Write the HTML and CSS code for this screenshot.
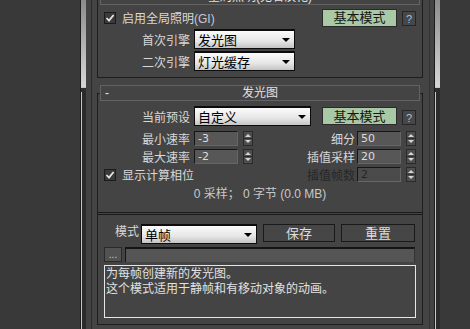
FILE: index.html
```html
<!DOCTYPE html>
<html>
<head>
    <title>发光图</title>
    <link rel="stylesheet" href="styles.css">
</head>
<body>
<div class="frame">
    <div class="scroll"><div class="thumb"></div><div class="track"></div></div>
    <div class="well">
        <div class="rollout top">
            <div class="rtitle"><span class="minus"></span><span class="ttl">全局照明(无名汉化)</span><span class="minus"></span></div>
            <div class="rbody first">
                <div class="row tall">
                    <span class="check">
                        <svg width="12" height="12" viewBox="0 0 12 12"><rect x="0.5" y="0.5" width="11" height="11" fill="#3a3a3a" stroke="#1c1c1c"/><path d="M2.5 6 L5 8.6 L9.6 3" fill="none" stroke="#e4e4e4" stroke-width="1.8"/></svg>
                    </span>
                    <span class="check-label">启用全局照明<span class="latin">(GI)</span></span>
                    <button class="mode">基本模式</button>
                    <button class="help">?</button>
                </div>
                <div class="row combo-row">
                    <label class="lbl">首次引擎</label>
                    <div class="combo w100"><span>发光图</span><span class="arrow"></span></div>
                </div>
                <div class="row combo-row">
                    <label class="lbl">二次引擎</label>
                    <div class="combo w100"><span>灯光缓存</span><span class="arrow"></span></div>
                </div>
            </div>
        </div>

        <div class="rollout second">
            <div class="rtitle"><span class="minus">-</span><span class="ttl">发光图</span><span class="minus"></span></div>
            <div class="rbody">
                <div class="row preset-row">
                    <label class="lbl">当前预设</label>
                    <div class="combo w116"><span>自定义</span><span class="arrow"></span></div>
                    <button class="mode">基本模式</button>
                    <button class="help">?</button>
                </div>
                <div class="row spin-row">
                    <label class="lbl">最小速率</label>
                    <div class="field">-3</div>
                    <span class="spin"><svg width="10" height="15" viewBox="0 0 10 15"><rect x="0.5" y="0.5" width="9" height="14" fill="#4e4e4e" stroke="#2a2a2a"/><path d="M5 3 L8 6 L2 6 Z" fill="#d4d4d4"/><path d="M2 9 L8 9 L5 12 Z" fill="#d4d4d4"/><line x1="1" y1="7.5" x2="9" y2="7.5" stroke="#2e2e2e"/></svg></span>
                    <label class="rlbl">细分</label>
                    <div class="field">50</div>
                    <span class="spin"><svg width="10" height="15" viewBox="0 0 10 15"><rect x="0.5" y="0.5" width="9" height="14" fill="#4e4e4e" stroke="#2a2a2a"/><path d="M5 3 L8 6 L2 6 Z" fill="#d4d4d4"/><path d="M2 9 L8 9 L5 12 Z" fill="#d4d4d4"/><line x1="1" y1="7.5" x2="9" y2="7.5" stroke="#2e2e2e"/></svg></span>
                </div>
                <div class="row spin-row">
                    <label class="lbl">最大速率</label>
                    <div class="field">-2</div>
                    <span class="spin"><svg width="10" height="15" viewBox="0 0 10 15"><rect x="0.5" y="0.5" width="9" height="14" fill="#4e4e4e" stroke="#2a2a2a"/><path d="M5 3 L8 6 L2 6 Z" fill="#d4d4d4"/><path d="M2 9 L8 9 L5 12 Z" fill="#d4d4d4"/><line x1="1" y1="7.5" x2="9" y2="7.5" stroke="#2e2e2e"/></svg></span>
                    <label class="rlbl">插值采样</label>
                    <div class="field">20</div>
                    <span class="spin"><svg width="10" height="15" viewBox="0 0 10 15"><rect x="0.5" y="0.5" width="9" height="14" fill="#4e4e4e" stroke="#2a2a2a"/><path d="M5 3 L8 6 L2 6 Z" fill="#d4d4d4"/><path d="M2 9 L8 9 L5 12 Z" fill="#d4d4d4"/><line x1="1" y1="7.5" x2="9" y2="7.5" stroke="#2e2e2e"/></svg></span>
                </div>
                <div class="row spin-row">
                    <span class="check">
                        <svg width="12" height="12" viewBox="0 0 12 12"><rect x="0.5" y="0.5" width="11" height="11" fill="#3a3a3a" stroke="#1c1c1c"/><path d="M2.5 6 L5 8.6 L9.6 3" fill="none" stroke="#e4e4e4" stroke-width="1.8"/></svg>
                    </span>
                    <span class="check-label">显示计算相位</span>
                    <label class="rlbl off">插值帧数</label>
                    <div class="field off">2</div>
                    <span class="spin"><svg width="10" height="15" viewBox="0 0 10 15"><rect x="0.5" y="0.5" width="9" height="14" fill="#4e4e4e" stroke="#2a2a2a"/><path d="M5 3 L8 6 L2 6 Z" fill="#d4d4d4"/><path d="M2 9 L8 9 L5 12 Z" fill="#d4d4d4"/><line x1="1" y1="7.5" x2="9" y2="7.5" stroke="#2e2e2e"/></svg></span>
                </div>
                <div class="info">0 采样； 0 字节 (0.0 MB)</div>
                <div class="sep"></div>
                <div class="row mode-row">
                    <label class="mlbl">模式</label>
                    <div class="combo w115"><span>单帧</span><span class="arrow"></span></div>
                    <button class="btn w72">保存</button>
                    <button class="btn w74">重置</button>
                </div>
                <div class="row path-row">
                    <button class="dots">...</button>
                    <div class="path"></div>
                </div>
                <div class="notes">为每帧创建新的发光图。<br>这个模式适用于静帧和有移动对象的动画。</div>
            </div>
        </div>
    </div>
    <div class="scroll right"><div class="thumb"></div><div class="track"></div></div>
</div>
</body>
</html>
```

FILE: styles.css
```css
body {
    margin: 0;
    background-color: #393939;
    font-family: "Liberation Sans", "Noto Sans CJK SC", sans-serif;
    font-size: 12px;
    color: #d8d8d8;
    overflow: hidden;
}

.frame {
    display: flex;
    margin-left: 80px;
    width: 360px;
    height: 329px;
    background-color: #434343;
}

.scroll {
    display: flex;
    flex-direction: column;
    width: 5px;
    border-left: 1px solid #1c1c1c;
}

.scroll .thumb {
    height: 92px;
    background: linear-gradient(#8c8c8c, #c4c4c4 70%, #d6d6d6 95%, #2e2e2e 96%);
}

.scroll .track {
    flex: 1;
    background-color: #2b2b2b;
    border-left: 1px solid #c8c8c8;
}

.well {
    margin-left: 5px;
    margin-right: 4px;
    padding: 0 6px 0 5px;
    width: 326px;
    border-left: 1px solid #2c2c2c;
    border-right: 1px solid #333;
    background-color: #444;
}

.rtitle {
    position: relative;
    display: flex;
    height: 14px;
    margin: 0 3px;
    border: 1px solid #626262;
    background-color: #444;
    line-height: 14px;
    color: #e2e2e2;
}

.rtitle .minus {
    width: 24px;
    padding-left: 4px;
}

.rtitle .ttl {
    flex: 1;
    text-align: center;
}

.rollout.top .rtitle {
    margin-top: -11px;
}

.rollout.second {
    margin-top: 7px;
}

.rbody {
    margin-top: -8px;
    border: 1px solid #1e1e1e;
    padding: 12px 0 6px 0;
}

.rbody.first {
    padding-top: 10px;
}

.row {
    display: flex;
    align-items: center;
    padding-right: 6px;
    white-space: nowrap;
}

.row > * {
    flex-shrink: 0;
}

.row.tall {
    height: 19px;
    padding-left: 6px;
}

.combo-row {
    height: 20px;
    margin-top: 2px;
}

.preset-row {
    height: 20px;
}

.spin-row {
    height: 15px;
    margin-top: 3px;
}

.preset-row + .spin-row {
    margin-top: 5px;
}

.lbl {
    width: 92px;
    margin-right: 4px;
    text-align: right;
}

.check {
    display: flex;
    margin-left: 6px;
}

.row.tall .check {
    margin-left: 0;
}

.check-label {
    margin-left: 6px;
}

.latin {
    color: #c4cad6;
}

.combo {
    display: flex;
    align-items: center;
    justify-content: space-between;
    box-sizing: border-box;
    height: 20px;
    padding: 0 4px 0 3px;
    border: 1px solid #0c0c0c;
    border-top-width: 2px;
    background: linear-gradient(#fbfbfb, #e6e6e6 60%, #c4c4c4);
    color: #000;
    font-size: 13px;
}

.combo .arrow {
    width: 0;
    height: 0;
    border-left: 4px solid transparent;
    border-right: 4px solid transparent;
    border-top: 4px solid #000;
}

.w100 { width: 101px; }
.w116 { width: 117px; }
.w115 { width: 116px; }

button {
    font-family: "Liberation Sans", "Noto Sans CJK SC", sans-serif;
    padding: 0;
    cursor: pointer;
}

.mode {
    margin-left: auto;
    box-sizing: border-box;
    width: 75px;
    height: 18px;
    border: 1px solid #2a2a2a;
    background-color: #a9c9a6;
    color: #151515;
    font-size: 13px;
    line-height: 15px;
}

.help {
    align-self: flex-end;
    margin-left: 5px;
    margin-bottom: 1px;
    box-sizing: border-box;
    width: 14px;
    height: 15px;
    border: 1px solid #262626;
    background-color: #474747;
    color: #a8c0d8;
    font-size: 11px;
    line-height: 12px;
}

.field {
    box-sizing: border-box;
    width: 44px;
    height: 15px;
    padding-left: 3px;
    border-top: 1px solid #161616;
    border-left: 1px solid #161616;
    border-right: 1px solid #666;
    border-bottom: 1px solid #666;
    background-color: #575757;
    color: #dcdcdc;
    font-family: "DejaVu Sans", sans-serif;
    font-size: 11px;
    line-height: 13px;
}

.field.off {
    background-color: #4b4b4b;
    color: #262626;
}

.spin {
    display: flex;
    margin-left: 5px;
}

.rlbl {
    flex: 1;
    flex-shrink: 1;
    margin-right: 2px;
    text-align: right;
}

.rlbl.off {
    color: #272727;
}

.info {
    height: 14px;
    margin-top: 5px;
    text-align: center;
    line-height: 14px;
    color: #c8c8c8;
}

.sep {
    height: 1px;
    margin-top: 11px;
    border-top: 1px solid #1a1a1a;
    border-bottom: 1px solid #1a1a1a;
}

.mode-row {
    height: 20px;
    margin-top: 9px;
    padding-left: 17px;
    padding-right: 7px;
}

.mlbl {
    width: 25px;
    margin-right: 1px;
    align-self: flex-start;
    line-height: 16px;
}

.btn {
    box-sizing: border-box;
    height: 18px;
    margin-left: 6px;
    align-self: flex-start;
    border: 1px solid #1a1a1a;
    background-color: #464646;
    color: #dcdcdc;
    font-size: 13px;
    line-height: 15px;
}

.w72 { width: 72px; }
.w74 { width: 74px; }

.path-row {
    height: 15px;
    margin-top: 3px;
    padding-left: 6px;
    padding-right: 7px;
}

.dots {
    box-sizing: border-box;
    width: 18px;
    height: 15px;
    border: 1px solid #2a2a2a;
    background-color: #525252;
    color: #d0d0d0;
    font-size: 10px;
    line-height: 10px;
}

.path {
    flex: 1;
    flex-shrink: 1;
    box-sizing: border-box;
    height: 15px;
    margin-left: 3px;
    border-top: 2px solid #141414;
    border-left: 1px solid #141414;
    border-right: 1px solid #333;
    background-color: #555;
}

.notes {
    box-sizing: border-box;
    height: 53px;
    margin: 3px 6px 0 6px;
    padding: 1px 0 0 1px;
    border: 1px solid #e6e6e6;
    background-color: #444;
    color: #e2e2e2;
    font-size: 12px;
    line-height: 15px;
}
```
